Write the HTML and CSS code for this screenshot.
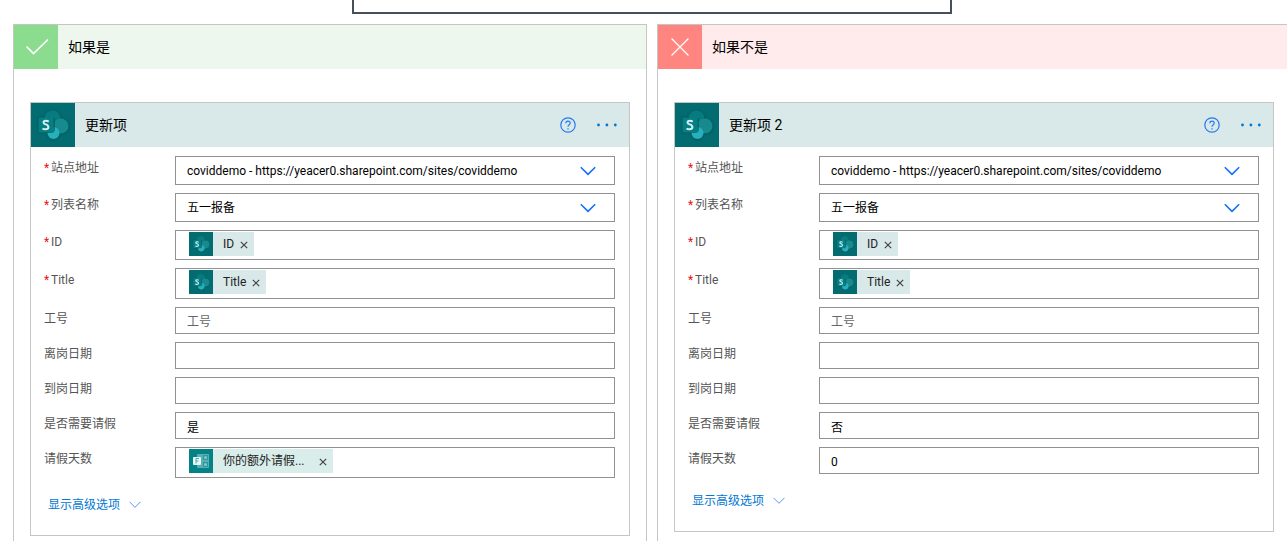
FILE: index.html
```html
<!DOCTYPE html>
<html lang="zh-CN">
<head>
<meta charset="utf-8">
<meta name="viewport" content="width=device-width, initial-scale=1">
<title>更新项</title>
<link rel="stylesheet" href="styles.css">
</head>
<body>
<svg class="defs" aria-hidden="true">
  <defs>
    <filter id="soft" x="-20%" y="-20%" width="140%" height="140%"><feGaussianBlur stdDeviation="1.2"/></filter>
    <symbol id="sharepoint" viewBox="0 0 44 44">
      <rect width="44" height="44" fill="#036c70"/>
      <g fill="#01484b" opacity=".55" filter="url(#soft)">
        <circle cx="21.500" cy="16" r="8.500"/><circle cx="30" cy="23.500" r="8"/><circle cx="22.500" cy="30.500" r="6.500"/><rect x="7" y="14" width="16" height="16" rx="1"/>
      </g>
      <circle cx="21.500" cy="15.500" r="8" fill="#087b7f"/>
      <circle cx="30" cy="23" r="7.500" fill="#178a8f"/>
      <circle cx="22.500" cy="30" r="6" fill="#27b0bc"/>
      <path d="M16 15h8v11q0 4-4 4h-4z" fill="#025457" opacity=".6"/>
      <rect x="7.500" y="14.500" width="15" height="15" rx="1" fill="#047f84"/>
      <path d="M17.800 18.700q-1.400-.9-2.900-.9-2.400 0-2.400 1.700 0 1.200 2.300 1.900 2.600.8 2.600 2.700 0 2.200-3 2.200-1.700 0-2.900-.8" fill="none" stroke="#d9edee" stroke-width="2"/>
    </symbol>
    <symbol id="forms" viewBox="0 0 24 24">
      <rect width="24" height="24" fill="#038387"/>
      <rect x="8" y="5" width="12" height="14" rx="1" fill="#58b0b3"/>
      <rect x="14" y="6" width="5" height="5" fill="#2d999d"/>
      <rect x="14" y="13" width="5" height="5" fill="#2d999d"/>
      <circle cx="16.500" cy="8.500" r="1.500" fill="#86c9cb"/><circle cx="16.500" cy="15.500" r="1.500" fill="#86c9cb"/>
      <rect x="4" y="8" width="8" height="8" rx="1" fill="#e9f7f7"/>
      <path d="M7 14.500v-5h3M7 12h2.500" fill="none" stroke="#4ba9ac"/>
    </symbol>
    <symbol id="chevron" viewBox="0 0 16 10"><path d="M.8 1.200 8 8.400l7.200-7.200" fill="none" stroke="currentColor" stroke-width="1.500"/></symbol>
    <symbol id="chevron-thin" viewBox="0 0 12 8"><path d="M.5.800 6 6.300 11.500.8" fill="none" stroke="currentColor"/></symbol>
    <symbol id="close" viewBox="0 0 8 8"><path d="m.8.8 6.400 6.400M7.200.8.800 7.200" fill="none" stroke="currentColor" stroke-width="1.200"/></symbol>
    <symbol id="help" viewBox="0 0 16 16">
      <circle cx="8" cy="8" r="7.200" fill="none" stroke="currentColor" stroke-width="1.200"/>
      <path d="M5.800 6.300q0-2.200 2.200-2.200t2.200 2q0 1.100-1.200 1.900Q8 8.700 8 9.800M8 11.200v1.200" fill="none" stroke="currentColor" stroke-width="1.200"/>
    </symbol>
    <symbol id="more" viewBox="0 0 22 4"><g fill="currentColor"><circle cx="2.500" cy="2" r="1.400"/><circle cx="10.900" cy="2" r="1.400"/><circle cx="19.300" cy="2" r="1.400"/></g></symbol>
  </defs>
</svg>
<main class="canvas">
  <div class="condition"></div>
  <div class="branches">
    <section class="branch">
      <header class="branch-head branch-head-yes">
        <span class="branch-mark"><svg width="44" height="44" viewBox="0 0 44 44" aria-hidden="true"><path d="m12.500 21.500 7 7L34 14.500" fill="none" stroke="#fff" stroke-width="1.700"/></svg></span>
        <h2 class="title">如果是</h2>
      </header>
      <article class="card">
        <header class="card-head">
          <svg class="card-icon" aria-hidden="true"><use href="#sharepoint"/></svg>
          <h3 class="title">更新项</h3>
          <button class="icon-button" aria-label="帮助"><svg width="16" height="16"><use href="#help"/></svg></button>
          <button class="icon-button" aria-label="更多"><svg width="22" height="4"><use href="#more"/></svg></button>
        </header>
        <form class="form">
          <div class="row">
            <label class="label" for="y-site"><span class="required">*</span>站点地址</label>
            <div class="select"><select class="field field-select" id="y-site"><option>coviddemo - https://yeacer0.sharepoint.com/sites/coviddemo</option></select><svg class="arrow" aria-hidden="true"><use href="#chevron"/></svg></div>
          </div>
          <div class="row">
            <label class="label" for="y-list"><span class="required">*</span>列表名称</label>
            <div class="select"><select class="field field-select" id="y-list"><option>五一报备</option></select><svg class="arrow" aria-hidden="true"><use href="#chevron"/></svg></div>
          </div>
          <div class="row">
            <span class="label" id="y-id"><span class="required">*</span>ID</span>
            <div class="field field-tokens" role="group" aria-labelledby="y-id"><span class="token"><svg class="token-icon" aria-hidden="true"><use href="#sharepoint"/></svg><span class="token-text">ID</span><button class="token-remove" type="button" aria-label="删除 ID"><svg width="8" height="8"><use href="#close"/></svg></button></span></div>
          </div>
          <div class="row">
            <span class="label" id="y-title"><span class="required">*</span>Title</span>
            <div class="field field-tokens field-tall" role="group" aria-labelledby="y-title"><span class="token"><svg class="token-icon" aria-hidden="true"><use href="#sharepoint"/></svg><span class="token-text">Title</span><button class="token-remove" type="button" aria-label="删除 Title"><svg width="8" height="8"><use href="#close"/></svg></button></span></div>
          </div>
          <div class="row"><label class="label" for="y-no">工号</label><input class="field field-text" id="y-no" placeholder="工号"></div>
          <div class="row"><label class="label" for="y-leave">离岗日期</label><input class="field field-text" id="y-leave"></div>
          <div class="row"><label class="label" for="y-back">到岗日期</label><input class="field field-text" id="y-back"></div>
          <div class="row"><label class="label" for="y-need">是否需要请假</label><input class="field field-text" id="y-need" value="是"></div>
          <div class="row">
            <span class="label" id="y-days">请假天数</span>
            <div class="field field-tokens field-tall" role="group" aria-labelledby="y-days"><span class="token token-forms"><svg class="token-icon" aria-hidden="true"><use href="#forms"/></svg><span class="token-text">你的额外请假...</span><button class="token-remove" type="button" aria-label="删除"><svg width="8" height="8"><use href="#close"/></svg></button></span></div>
          </div>
          <button class="advanced" type="button">显示高级选项<svg width="12" height="8" aria-hidden="true"><use href="#chevron-thin"/></svg></button>
        </form>
      </article>
    </section>
    <section class="branch">
      <header class="branch-head branch-head-no">
        <span class="branch-mark"><svg width="44" height="44" viewBox="0 0 44 44" aria-hidden="true"><path d="m13.500 13.500 17 17M30.500 13.500l-17 17" fill="none" stroke="#fff" stroke-width="1.200"/></svg></span>
        <h2 class="title">如果不是</h2>
      </header>
      <article class="card">
        <header class="card-head">
          <svg class="card-icon" aria-hidden="true"><use href="#sharepoint"/></svg>
          <h3 class="title">更新项 2</h3>
          <button class="icon-button" aria-label="帮助"><svg width="16" height="16"><use href="#help"/></svg></button>
          <button class="icon-button" aria-label="更多"><svg width="22" height="4"><use href="#more"/></svg></button>
        </header>
        <form class="form">
          <div class="row">
            <label class="label" for="n-site"><span class="required">*</span>站点地址</label>
            <div class="select"><select class="field field-select" id="n-site"><option>coviddemo - https://yeacer0.sharepoint.com/sites/coviddemo</option></select><svg class="arrow" aria-hidden="true"><use href="#chevron"/></svg></div>
          </div>
          <div class="row">
            <label class="label" for="n-list"><span class="required">*</span>列表名称</label>
            <div class="select"><select class="field field-select" id="n-list"><option>五一报备</option></select><svg class="arrow" aria-hidden="true"><use href="#chevron"/></svg></div>
          </div>
          <div class="row">
            <span class="label" id="n-id"><span class="required">*</span>ID</span>
            <div class="field field-tokens" role="group" aria-labelledby="n-id"><span class="token"><svg class="token-icon" aria-hidden="true"><use href="#sharepoint"/></svg><span class="token-text">ID</span><button class="token-remove" type="button" aria-label="删除 ID"><svg width="8" height="8"><use href="#close"/></svg></button></span></div>
          </div>
          <div class="row">
            <span class="label" id="n-title"><span class="required">*</span>Title</span>
            <div class="field field-tokens field-tall" role="group" aria-labelledby="n-title"><span class="token"><svg class="token-icon" aria-hidden="true"><use href="#sharepoint"/></svg><span class="token-text">Title</span><button class="token-remove" type="button" aria-label="删除 Title"><svg width="8" height="8"><use href="#close"/></svg></button></span></div>
          </div>
          <div class="row"><label class="label" for="n-no">工号</label><input class="field field-text" id="n-no" placeholder="工号"></div>
          <div class="row"><label class="label" for="n-leave">离岗日期</label><input class="field field-text" id="n-leave"></div>
          <div class="row"><label class="label" for="n-back">到岗日期</label><input class="field field-text" id="n-back"></div>
          <div class="row"><label class="label" for="n-need">是否需要请假</label><input class="field field-text" id="n-need" value="否"></div>
          <div class="row"><label class="label" for="n-days">请假天数</label><input class="field field-text" id="n-days" value="0"></div>
          <button class="advanced" type="button">显示高级选项<svg width="12" height="8" aria-hidden="true"><use href="#chevron-thin"/></svg></button>
        </form>
      </article>
    </section>
  </div>
</main>
</body>
</html>
```

FILE: styles.css
```css
* { box-sizing: border-box; }
html { overflow-x: hidden; }
body {
  margin: 0;
  background: #fff;
  color: #000;
  font: 12px/16px Roboto, "Noto Sans CJK SC", sans-serif;
}
svg { display: block; flex: none; }
button, input, select { font: inherit; color: inherit; }
button { padding: 0; border: 0; background: none; cursor: pointer; }
.defs { position: absolute; width: 0; height: 0; }

/* The canvas runs slightly past the right edge of the window. */
.canvas { display: flex; flex-direction: column; min-height: 100vh; margin: 0 -4px 0 13px; }
.condition {
  width: 100%;
  max-width: 600px;
  height: 14px;
  margin: 0 auto 10px;
  border: 2px solid #464f5b;
  border-top: 0;
}
.branches { display: grid; flex: 1; grid-template-columns: 1fr 1fr; gap: 10px; }
.branch { border: 1px solid #c5c5c5; border-bottom: 0; }
.branch-head, .card-head { display: flex; align-items: center; height: 44px; }
.branch-head { gap: 10px; }
.branch-head-yes { background: #edf7ee; }
.branch-head-yes .branch-mark { background: #8bdc8f; }
.branch-head-no { background: #ffebeb; }
.branch-head-no .branch-mark { background: #ff8680; }
.title { margin: 0; font-size: 14px; font-weight: 400; line-height: 20px; }

.card { margin: 33px 16px 0; border: 1px solid #c5c5c5; }
.card-head { padding-right: 11px; background: #d9e8e8; }
.card-icon { width: 44px; height: 44px; }
.card-head .title { flex: 1; padding-left: 10px; }
.icon-button { margin-left: 20px; color: #2479f0; }
.icon-button + .icon-button { color: #0078d4; }

.form { display: flex; flex-direction: column; gap: 8px; padding: 9px 14px 22px 13px; }
.row { display: grid; grid-template-columns: 131px 1fr; }
.label { padding-top: 4px; color: #555; }
.required { display: inline-block; width: 7px; color: #e81123; }
.field { width: 100%; border: 1px solid #919191; border-radius: 0; background: #fff; outline: 0; }
.select { position: relative; }
.field-select { display: block; height: 29px; padding: 0 40px 0 11px; appearance: none; }
.arrow { position: absolute; top: 10px; right: 19px; width: 16px; height: 10px; color: #0f6cff; pointer-events: none; }
.field-text { height: 27px; padding: 2px 11px 0; }
.field-text::placeholder { color: #666; opacity: 1; }
.field-tokens { display: flex; align-items: flex-start; min-height: 30px; padding: 1px 13px; }
.field-tall { min-height: 31px; }
.token { display: flex; align-items: center; height: 24px; padding-right: 6px; background: #d9e8e8; }
.token-forms { background: #d9edeb; }
.token-icon { width: 24px; height: 24px; }
.token-text { padding: 0 6px 0 10px; color: #222; }
.token-forms .token-text { min-width: 106px; }
.token-remove { padding-top: 2px; color: #444; }

.advanced { display: flex; align-items: center; align-self: flex-start; gap: 9px; margin: 11px 0 0 4px; color: #0078d4; }
.advanced svg { color: #5b95f5; }
```
